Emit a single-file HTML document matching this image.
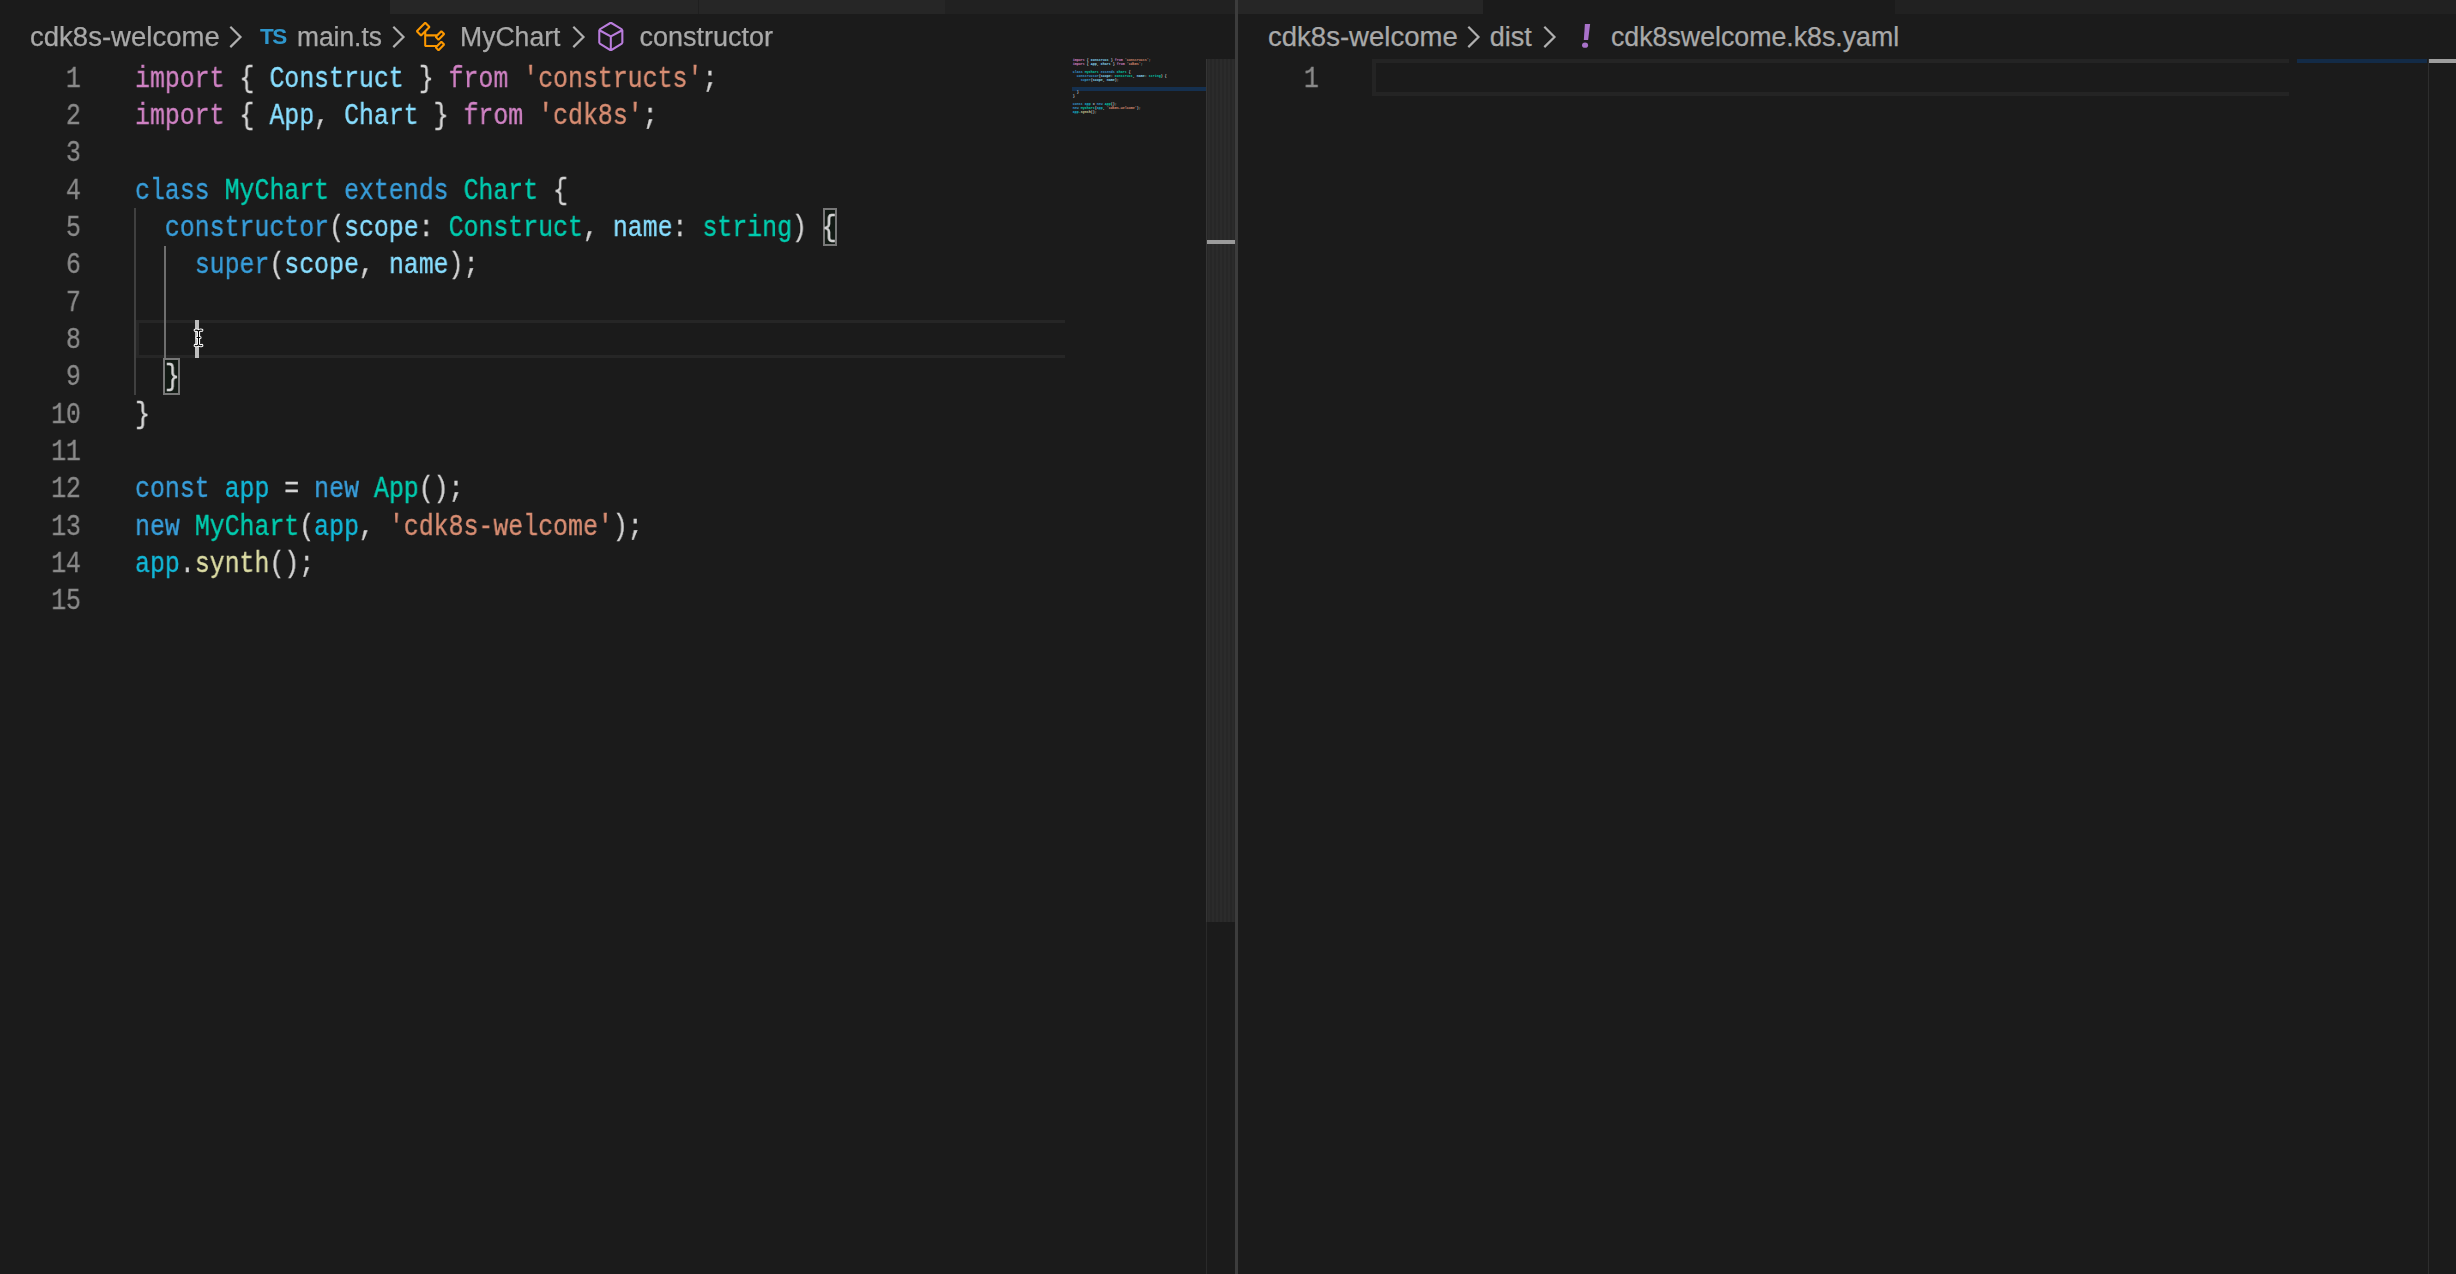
<!DOCTYPE html>
<html><head><meta charset="utf-8">
<style>
html,body{margin:0;padding:0;}
body{width:2456px;height:1274px;overflow:hidden;background:#1b1b1b;position:relative;font-family:"Liberation Sans",sans-serif;}
.a{position:absolute;}
.code{position:absolute;left:0;-webkit-text-stroke:0.35px currentColor;font-family:"Liberation Mono",monospace;font-size:29.0px;line-height:37.33px;height:37.33px;white-space:pre;color:#d4d4d4;}
.ln{position:absolute;left:0;width:81px;-webkit-text-stroke:0.3px currentColor;text-align:right;transform:scaleX(0.85792);transform-origin:100% 0;will-change:transform;font-family:"Liberation Mono",monospace;font-size:29.0px;line-height:37.33px;height:37.33px;color:#8a8a8a;}
.k{color:#d082c4}.b{color:#389edb}.t{color:#00ccaf}.v{color:#88deff}.s{color:#d98e73}.c{color:#12b8d8}.f{color:#dcdca4}.p{color:#d4d4d4}
.mm{position:absolute;left:0;font-family:"Liberation Mono",monospace;font-size:3.333px;font-weight:bold;line-height:4px;height:4px;white-space:pre;color:#d4d4d4;letter-spacing:-0.0px}
.bc{position:absolute;top:22px;height:30px;line-height:30px;font-size:22px;color:#a6a6a6;white-space:pre;transform-origin:0 50%;}
</style></head><body>

<div class="a" style="left:390px;top:0;width:555px;height:14px;background:#262626"></div>
<div class="a" style="left:945px;top:0;width:290px;height:14px;background:#212121"></div>
<div class="a" style="left:1238px;top:0;width:245px;height:14px;background:#262626"></div>
<div class="a" style="left:1895px;top:0;width:561px;height:14px;background:#212121"></div>
<div class="a" style="left:698px;top:0;width:1px;height:14px;background:#1f1f1f"></div>
<div class="a" style="left:136px;top:320px;width:929px;height:38px;box-sizing:border-box;border:3.5px solid #262626;border-right:none"></div>
<div class="a" style="left:1372px;top:59px;width:917px;height:37px;box-sizing:border-box;border:4px solid #242424;border-right:none"></div>
<div class="a" style="left:134px;top:208px;width:2px;height:187px;background:#404040"></div>
<div class="a" style="left:164px;top:246px;width:2px;height:112px;background:#6e6e6e"></div>
<div class="a" style="left:823px;top:208px;width:14px;height:38px;box-sizing:border-box;border:2px solid #787878;background:#121a14"></div>
<div class="a" style="left:163px;top:358px;width:17px;height:37px;box-sizing:border-box;border:2px solid #787878;background:#121a14"></div>
<div class="ln" style="top:60.70px">1</div>
<div class="ln" style="top:98.03px">2</div>
<div class="ln" style="top:135.36px">3</div>
<div class="ln" style="top:172.69px">4</div>
<div class="ln" style="top:210.02px">5</div>
<div class="ln" style="top:247.35px">6</div>
<div class="ln" style="top:284.68px">7</div>
<div class="ln" style="top:322.01px">8</div>
<div class="ln" style="top:359.34px">9</div>
<div class="ln" style="top:396.67px">10</div>
<div class="ln" style="top:434.00px">11</div>
<div class="ln" style="top:471.33px">12</div>
<div class="ln" style="top:508.66px">13</div>
<div class="ln" style="top:545.99px">14</div>
<div class="ln" style="top:583.32px">15</div>
<div class="a" style="left:135px;top:0;width:1000px;height:700px;transform:scaleX(0.85792);transform-origin:0 0;will-change:transform"><div class="code" style="top:60.70px"><span class="k">import</span> { <span class="v">Construct</span> } <span class="k">from</span> <span class="s">'constructs'</span>;</div><div class="code" style="top:98.03px"><span class="k">import</span> { <span class="v">App</span>, <span class="v">Chart</span> } <span class="k">from</span> <span class="s">'cdk8s'</span>;</div><div class="code" style="top:172.69px"><span class="b">class</span> <span class="t">MyChart</span> <span class="b">extends</span> <span class="t">Chart</span> {</div><div class="code" style="top:210.02px">  <span class="b">constructor</span>(<span class="v">scope</span>: <span class="t">Construct</span>, <span class="v">name</span>: <span class="t">string</span>) {</div><div class="code" style="top:247.35px">    <span class="b">super</span>(<span class="v">scope</span>, <span class="v">name</span>);</div><div class="code" style="top:359.34px">  }</div><div class="code" style="top:396.67px">}</div><div class="code" style="top:471.33px"><span class="b">const</span> <span class="c">app</span> = <span class="b">new</span> <span class="t">App</span>();</div><div class="code" style="top:508.66px"><span class="b">new</span> <span class="t">MyChart</span>(<span class="c">app</span>, <span class="s">'cdk8s-welcome'</span>);</div><div class="code" style="top:545.99px"><span class="c">app</span>.<span class="f">synth</span>();</div></div>
<div class="ln" style="left:1238px;top:60.70px">1</div>
<div class="a" style="left:30.1px;top:21.7px;height:30px;line-height:30px;font-size:27px;color:#a9a9a9;-webkit-text-stroke:0.25px #a9a9a9;white-space:pre;transform:scaleX(1.02);transform-origin:0 0">cdk8s-welcome</div>
<svg class="a" style="left:228.3px;top:24px" width="16" height="26" viewBox="0 0 16 26"><polyline points="2.3,2.8 12.5,13.1 2.3,23.1" fill="none" stroke="#b0b0b0" stroke-width="2.2"/></svg>
<div class="a" style="left:260px;top:22.2px;height:30px;line-height:30px;font-size:22.5px;font-weight:bold;color:#2e96cc;letter-spacing:-1.6px">TS</div>
<div class="a" style="left:297.0px;top:21.7px;height:30px;line-height:30px;font-size:27px;color:#a9a9a9;-webkit-text-stroke:0.25px #a9a9a9;white-space:pre;transform:scaleX(0.976);transform-origin:0 0">main.ts</div>
<svg class="a" style="left:391px;top:24px" width="16" height="26" viewBox="0 0 16 26"><polyline points="2.3,2.8 12.5,13.1 2.3,23.1" fill="none" stroke="#b0b0b0" stroke-width="2.2"/></svg>
<svg class="a" style="left:414.2px;top:19.7px" width="33.6" height="33.6" viewBox="0 0 16 16"><path fill="#fc9800" d="M11.34 9.71h.71l2.67-2.67v-.71L13.38 5h-.7l-1.82 1.81h-5V5.56l1.86-1.85V3l-2-2H5L1 5v.71l2 2h.71l1.14-1.15v5.79l.5.5H10v.52l1.33 1.34h.71l2.67-2.67v-.71L13.37 10h-.7l-1.86 1.85h-5v-4H10v.48l1.34 1.38zm1.69-3.65l.63.63-2 2-.63-.63 2-2zm0 5l.63.63-2 2-.63-.63 2-2zM3.35 6.65l-1.29-1.3 3.29-3.29 1.3 1.29-3.3 3.3z"/></svg>
<div class="a" style="left:460.2px;top:21.7px;height:30px;line-height:30px;font-size:27px;color:#a9a9a9;-webkit-text-stroke:0.25px #a9a9a9;white-space:pre;transform:scaleX(0.984);transform-origin:0 0">MyChart</div>
<svg class="a" style="left:570.8px;top:24px" width="16" height="26" viewBox="0 0 16 26"><polyline points="2.3,2.8 12.5,13.1 2.3,23.1" fill="none" stroke="#b0b0b0" stroke-width="2.2"/></svg>
<svg class="a" style="left:593.7px;top:19.7px" width="33.6" height="33.6" viewBox="0 0 16 16"><path fill="#ba7ddd" d="M13.51 4l-5-3h-1l-5 3-.49.86v6l.49.85 5 3h1l5-3 .49-.85v-6L13.51 4zm-6 9.56l-4.5-2.7V5.7l4.5 2.45v5.41zM3.27 4.7l4.74-2.84 4.74 2.84-4.74 2.59L3.27 4.7zM13 10.86l-4.5 2.7V8.15L13 5.7v5.16z"/></svg>
<div class="a" style="left:639.5px;top:21.7px;height:30px;line-height:30px;font-size:27px;color:#a9a9a9;-webkit-text-stroke:0.25px #a9a9a9;white-space:pre;transform:scaleX(1.0);transform-origin:0 0">constructor</div>
<div class="a" style="left:1268.3px;top:21.7px;height:30px;line-height:30px;font-size:27px;color:#a9a9a9;-webkit-text-stroke:0.25px #a9a9a9;white-space:pre;transform:scaleX(1.02);transform-origin:0 0">cdk8s-welcome</div>
<svg class="a" style="left:1466.4px;top:24px" width="16" height="26" viewBox="0 0 16 26"><polyline points="2.3,2.8 12.5,13.1 2.3,23.1" fill="none" stroke="#b0b0b0" stroke-width="2.2"/></svg>
<div class="a" style="left:1489.7px;top:21.7px;height:30px;line-height:30px;font-size:27px;color:#a9a9a9;-webkit-text-stroke:0.25px #a9a9a9;white-space:pre;transform:scaleX(1.0);transform-origin:0 0">dist</div>
<svg class="a" style="left:1542.2px;top:24px" width="16" height="26" viewBox="0 0 16 26"><polyline points="2.3,2.8 12.5,13.1 2.3,23.1" fill="none" stroke="#b0b0b0" stroke-width="2.2"/></svg>
<svg class="a" style="left:1578px;top:22px" width="16" height="28" viewBox="0 0 16 28"><path fill="#a872c9" d="M6.9 2 L12.1 2 L10.1 18.1 L5.8 18.1 Z"/><ellipse cx="7.05" cy="23.15" rx="3.0" ry="2.6" fill="#a872c9"/></svg>
<div class="a" style="left:1610.6px;top:21.7px;height:30px;line-height:30px;font-size:27px;color:#a9a9a9;-webkit-text-stroke:0.25px #a9a9a9;white-space:pre;transform:scaleX(0.99);transform-origin:0 0">cdk8swelcome.k8s.yaml</div>
<div class="a" style="left:195px;top:320px;width:4px;height:38px;background:#bdbdbd"></div>
<svg class="a" style="left:190px;top:325px" width="18" height="28" viewBox="0 0 18 28"><path d="M5.2 5.3 Q7.2 4.6 8.5 6.2 Q9.8 4.6 11.8 5.3 M8.5 6.2 V19.6 M7 12.5 H10 M5.2 20.5 Q7.2 21.2 8.5 19.6 Q9.8 21.2 11.8 20.5" fill="none" stroke="#ffffff" stroke-width="3.2" stroke-linecap="round" stroke-linejoin="round"/><path d="M5.2 5.3 Q7.2 4.6 8.5 6.2 Q9.8 4.6 11.8 5.3 M8.5 6.2 V19.6 M7 12.5 H10 M5.2 20.5 Q7.2 21.2 8.5 19.6 Q9.8 21.2 11.8 20.5" fill="none" stroke="#000" stroke-width="1.1" stroke-linecap="round" stroke-linejoin="round"/></svg>
<div class="a" style="left:1072px;top:86.5px;width:134px;height:4.5px;background:#15304f"></div>
<div class="a" style="left:1072.8px;top:0;width:134px;height:200px"><div class="mm" style="top:58.4px"><span class="k">import</span> { <span class="v">Construct</span> } <span class="k">from</span> <span class="s">'constructs'</span>;</div><div class="mm" style="top:62.4px"><span class="k">import</span> { <span class="v">App</span>, <span class="v">Chart</span> } <span class="k">from</span> <span class="s">'cdk8s'</span>;</div><div class="mm" style="top:70.4px"><span class="b">class</span> <span class="t">MyChart</span> <span class="b">extends</span> <span class="t">Chart</span> {</div><div class="mm" style="top:74.4px">  <span class="b">constructor</span>(<span class="v">scope</span>: <span class="t">Construct</span>, <span class="v">name</span>: <span class="t">string</span>) {</div><div class="mm" style="top:78.4px">    <span class="b">super</span>(<span class="v">scope</span>, <span class="v">name</span>);</div><div class="mm" style="top:90.4px">  }</div><div class="mm" style="top:94.4px">}</div><div class="mm" style="top:102.4px"><span class="b">const</span> <span class="c">app</span> = <span class="b">new</span> <span class="t">App</span>();</div><div class="mm" style="top:106.4px"><span class="b">new</span> <span class="t">MyChart</span>(<span class="c">app</span>, <span class="s">'cdk8s-welcome'</span>);</div><div class="mm" style="top:110.4px"><span class="c">app</span>.<span class="f">synth</span>();</div></div>
<div class="a" style="left:1206px;top:58.8px;width:29px;height:863px;background:repeating-linear-gradient(90deg,#272727 0px,#272727 2px,#2b2b2b 2px,#2b2b2b 4px)"></div>
<div class="a" style="left:1206px;top:58.8px;width:1px;height:863px;background:#353535"></div>
<div class="a" style="left:1206px;top:921.8px;width:1px;height:353px;background:#2a2a2a"></div>
<div class="a" style="left:1207px;top:240px;width:28px;height:4px;background:#9a9a9a"></div>
<div class="a" style="left:1235px;top:0;width:3px;height:1274px;background:#3c3c3c"></div>
<div class="a" style="left:2297px;top:59px;width:130px;height:4px;background:#132b47"></div>
<div class="a" style="left:2428px;top:59px;width:1px;height:1215px;background:#2e2e2e"></div>
<div class="a" style="left:2429px;top:59px;width:27px;height:4px;background:#9e9e9e"></div>
</body></html>
